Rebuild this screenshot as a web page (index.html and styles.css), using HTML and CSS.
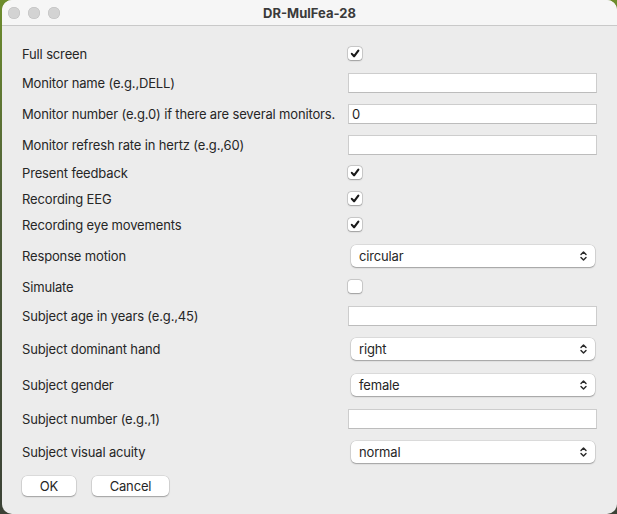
FILE: index.html
```html
<!DOCTYPE html>
<html lang="en">
<head>
<meta charset="utf-8">
<title>DR-MulFea-28</title>
<link rel="stylesheet" href="styles.css">
</head>
<body>
<div class="window">
  <div class="titlebar">
    <div class="lights">
      <span class="light"></span><span class="light"></span><span class="light"></span>
    </div>
    <div class="title">DR-MulFea-28</div>
  </div>
  <div class="content">
    <div class="row row-check">
      <span class="label">Full screen</span>
      <span class="check on"><svg viewBox="0 0 14 14" width="14" height="14"><path d="M3.6 7.4 L6 10 L10.6 3.8" /></svg></span>
    </div>
    <div class="row row-text">
      <span class="label">Monitor name (e.g.,DELL)</span>
      <span class="field"></span>
    </div>
    <div class="row row-text">
      <span class="label">Monitor number (e.g.0) if there are several monitors.</span>
      <span class="field">0</span>
    </div>
    <div class="row row-text">
      <span class="label">Monitor refresh rate in hertz (e.g.,60)</span>
      <span class="field"></span>
    </div>
    <div class="row row-check">
      <span class="label">Present feedback</span>
      <span class="check on"><svg viewBox="0 0 14 14" width="14" height="14"><path d="M3.6 7.4 L6 10 L10.6 3.8" /></svg></span>
    </div>
    <div class="row row-check">
      <span class="label">Recording EEG</span>
      <span class="check on"><svg viewBox="0 0 14 14" width="14" height="14"><path d="M3.6 7.4 L6 10 L10.6 3.8" /></svg></span>
    </div>
    <div class="row row-check">
      <span class="label">Recording eye movements</span>
      <span class="check on"><svg viewBox="0 0 14 14" width="14" height="14"><path d="M3.6 7.4 L6 10 L10.6 3.8" /></svg></span>
    </div>
    <div class="row row-select">
      <span class="label">Response motion</span>
      <span class="select"><span class="value">circular</span><svg class="chev" viewBox="0 0 7 12" width="7" height="12"><path d="M1 4.6 L3.5 2 L6 4.6 M1 7.4 L3.5 10 L6 7.4" /></svg></span>
    </div>
    <div class="row row-check">
      <span class="label">Simulate</span>
      <span class="check"></span>
    </div>
    <div class="row row-text">
      <span class="label">Subject age in years (e.g.,45)</span>
      <span class="field"></span>
    </div>
    <div class="row row-select">
      <span class="label">Subject dominant hand</span>
      <span class="select"><span class="value">right</span><svg class="chev" viewBox="0 0 7 12" width="7" height="12"><path d="M1 4.6 L3.5 2 L6 4.6 M1 7.4 L3.5 10 L6 7.4" /></svg></span>
    </div>
    <div class="row row-select">
      <span class="label">Subject gender</span>
      <span class="select"><span class="value">female</span><svg class="chev" viewBox="0 0 7 12" width="7" height="12"><path d="M1 4.6 L3.5 2 L6 4.6 M1 7.4 L3.5 10 L6 7.4" /></svg></span>
    </div>
    <div class="row row-text">
      <span class="label">Subject number (e.g.,1)</span>
      <span class="field"></span>
    </div>
    <div class="row row-select">
      <span class="label">Subject visual acuity</span>
      <span class="select"><span class="value">normal</span><svg class="chev" viewBox="0 0 7 12" width="7" height="12"><path d="M1 4.6 L3.5 2 L6 4.6 M1 7.4 L3.5 10 L6 7.4" /></svg></span>
    </div>
    <div class="buttons">
      <span class="btn btn-ok">OK</span>
      <span class="btn btn-cancel">Cancel</span>
    </div>
  </div>
</div>
</body>
</html>
```

FILE: styles.css
```css
html, body {
  margin: 0;
  padding: 0;
}
body {
  width: 617px;
  height: 514px;
  overflow: hidden;
  background: linear-gradient(180deg, #6d8d2c 0%, #4f5f3a 40%, #3b4236 100%);
  font-family: Inter, "Liberation Sans", sans-serif;
  font-size: 13px;
  letter-spacing: -0.15px;
  color: #262626;
}
.window {
  margin-left: 2px;
  width: 615px;
  height: 514px;
  border-radius: 10px;
  background: #ececec;
  overflow: hidden;
  display: flex;
  flex-direction: column;
}
.titlebar {
  height: 25px;
  flex: none;
  background: #f6f6f6;
  border-bottom: 1px solid #c9c9c9;
  position: relative;
  display: flex;
  align-items: center;
  justify-content: center;
}
.lights {
  position: absolute;
  left: 6px;
  top: 7px;
  display: flex;
  gap: 8px;
}
.light {
  width: 12px;
  height: 12px;
  border-radius: 50%;
  background: #d3d3d3;
  box-shadow: inset 0 0 0 0.5px #bdbdbd;
}
.title {
  font-weight: 700;
  font-size: 13px;
  letter-spacing: 0;
  color: #3a3a3a;
  padding-top: 1px;
}
.content {
  padding: 15px 0 0 20px;
  display: flex;
  flex-direction: column;
}
.row {
  display: grid;
  grid-template-columns: 326px auto;
  align-items: center;
}
.row-check { height: 26px; }
.row-text { height: 31px; }
.row-select { height: 36px; }
.label {
  white-space: nowrap;
}
.check {
  width: 14px;
  height: 13px;
  border-radius: 3px;
  background: #fff;
  box-shadow: 0 0 0 0.5px rgba(0,0,0,0.22), 0 0.5px 1.5px rgba(0,0,0,0.25);
  display: flex;
  margin-top: -1px;
}
.check svg {
  width: 14px;
  height: 13px;
}
.check path {
  fill: none;
  stroke: #1a1a1a;
  stroke-width: 2.3;
  stroke-linecap: round;
  stroke-linejoin: round;
}
.field {
  box-sizing: border-box;
  width: 249px;
  height: 20px;
  background: #fff;
  border: 1px solid #cdcdcd;
  border-bottom-color: #bcbcbc;
  padding-left: 3px;
  line-height: 18px;
  color: #1e1e1e;
}
.select {
  box-sizing: border-box;
  margin-left: 3px;
  width: 244px;
  height: 22px;
  border-radius: 5px;
  background: #fff;
  box-shadow: 0 0 0 0.5px rgba(0,0,0,0.14), 0 1px 1.5px rgba(0,0,0,0.28);
  display: flex;
  align-items: center;
  justify-content: space-between;
  padding: 0 8px 0 8px;
  color: #262626;
}
.chev path {
  fill: none;
  stroke: #2a2a2a;
  stroke-width: 1.4;
  stroke-linecap: round;
  stroke-linejoin: round;
}
.buttons {
  display: flex;
  gap: 16px;
  margin-top: 6px;
}
.btn {
  height: 20px;
  border-radius: 5px;
  background: #fff;
  box-shadow: 0 0 0 0.5px rgba(0,0,0,0.14), 0 1px 1.5px rgba(0,0,0,0.28);
  display: flex;
  align-items: center;
  justify-content: center;
  color: #262626;
}
.btn-ok { width: 54px; }
.btn-cancel { width: 77px; }
```
